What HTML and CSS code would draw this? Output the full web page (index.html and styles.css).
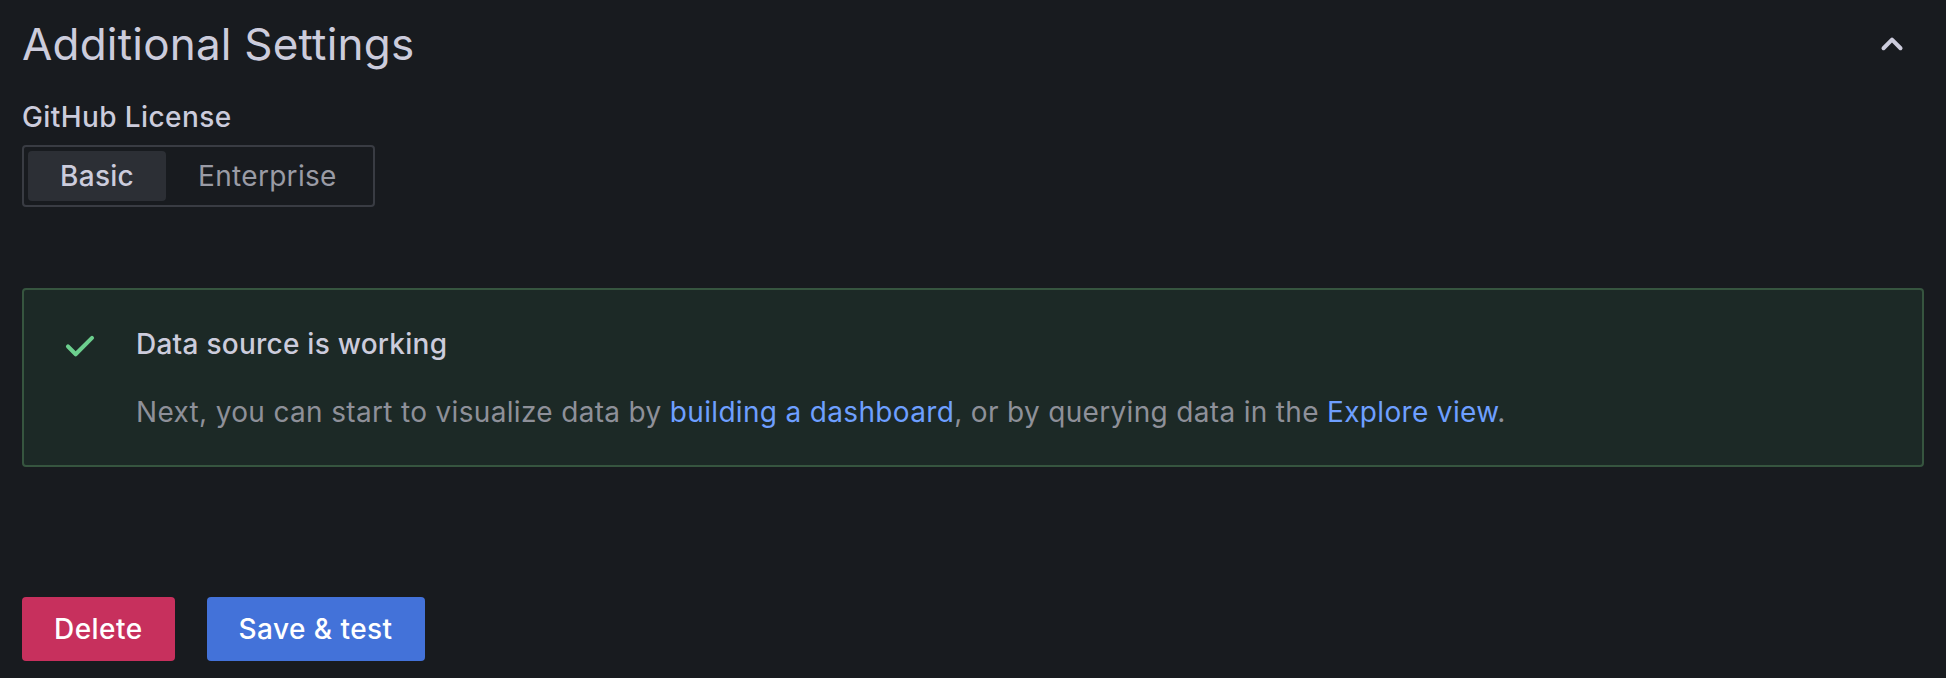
FILE: index.html
```html
<!DOCTYPE html>
<html lang="en">
<head>
<meta charset="utf-8">
<title>Additional Settings</title>
<link rel="stylesheet" href="styles.css">
</head>
<body>
<div class="page">
  <div class="section-header">
    <h3 class="section-title">Additional Settings</h3>
    <svg class="collapse-icon" viewBox="0 0 24 24" width="48" height="48" aria-hidden="true"><path d="M17,13.41,12.71,9.17a1,1,0,0,0-1.42,0L7.05,13.41a1,1,0,0,0,0,1.42,1,1,0,0,0,1.41,0L12,11.29l3.54,3.54a1,1,0,0,0,.7.29,1,1,0,0,0,.71-.29A1,1,0,0,0,17,13.41Z"/></svg>
  </div>

  <div class="field">
    <label class="field-label">GitHub License</label>
    <div class="radio-group">
      <span class="radio radio-active">Basic</span>
      <span class="radio">Enterprise</span>
    </div>
  </div>

  <div class="alert">
    <svg class="alert-icon" viewBox="0 0 24 24" width="48" height="48" aria-hidden="true"><path d="M18.71,7.21a1,1,0,0,0-1.42,0L9.84,14.67,6.71,11.53A1,1,0,1,0,5.29,13l3.84,3.84a1,1,0,0,0,1.42,0l8.16-8.16A1,1,0,0,0,18.71,7.21Z"/></svg>
    <div class="alert-body">
      <div class="alert-title">Data source is working</div>
      <div class="alert-text">Next, you can start to visualize data by <a class="link" href="#">building a dashboard</a>, or by querying data in the <a class="link" href="#">Explore view</a>.</div>
    </div>
  </div>

  <div class="actions">
    <button class="btn btn-destructive">Delete</button>
    <button class="btn btn-primary">Save &amp; test</button>
  </div>
</div>
</body>
</html>
```

FILE: styles.css
```css
html, body {
  margin: 0;
  padding: 0;
  background: #181b1f;
}
body {
  font-family: Inter, "Noto Sans", sans-serif;
  color: #ccccdc;
}
.page {
  padding: 18px 22px 0 22px;
}
.section-header {
  display: flex;
  align-items: center;
  justify-content: space-between;
}
.section-title {
  margin: 0;
  font-size: 44px;
  font-weight: 400;
  line-height: 52px;
  letter-spacing: 0.2px;
  color: #ccccdc;
}
.collapse-icon {
  fill: #ccccdc;
  margin-right: 8px;
}
.field {
  margin-top: 27px;
}
.field-label {
  display: block;
  font-size: 28px;
  font-weight: 500;
  line-height: 40px;
  letter-spacing: 0.4px;
  color: #ccccdc;
}
.radio-group {
  margin-top: 8px;
  display: inline-flex;
  border: 2px solid #393c43;
  border-radius: 4px;
  padding: 4px;
  height: 62px;
  box-sizing: border-box;
}
.radio {
  display: flex;
  align-items: center;
  padding: 0 32px;
  font-size: 28px;
  font-weight: 400;
  letter-spacing: 0.3px;
  color: #9a9ba5;
  border-radius: 4px;
}
.radio-active {
  background: #2c2f35;
  color: #ccccdc;
  font-weight: 500;
}
.alert {
  margin-top: 81px;
  display: flex;
  align-items: flex-start;
  gap: 32px;
  background: #1c2926;
  border: 2px solid #36553f;
  border-radius: 4px;
  padding: 32px 32px 33px 32px;
}
.alert-icon {
  fill: #6ccf8e;
  flex: none;
}
.alert-body {
  padding-top: 2px;
}
.alert-title {
  font-size: 28px;
  font-weight: 500;
  line-height: 40px;
  letter-spacing: 0.25px;
  color: #ccccdc;
}
.alert-text {
  margin-top: 28px;
  font-size: 28px;
  font-weight: 400;
  line-height: 40px;
  letter-spacing: 0.33px;
  color: #8e9099;
}
.link {
  color: #6e9fff;
  text-decoration: none;
}
.actions {
  margin-top: 130px;
  display: flex;
  gap: 32px;
}
.btn {
  height: 64px;
  padding: 0 32px;
  border: none;
  border-radius: 4px;
  font-family: Inter, "Noto Sans", sans-serif;
  font-size: 28px;
  font-weight: 500;
  letter-spacing: 0.45px;
  color: #ffffff;
}
.btn-destructive {
  background: #c7305d;
}
.btn-primary {
  background: #4372d9;
}
```
